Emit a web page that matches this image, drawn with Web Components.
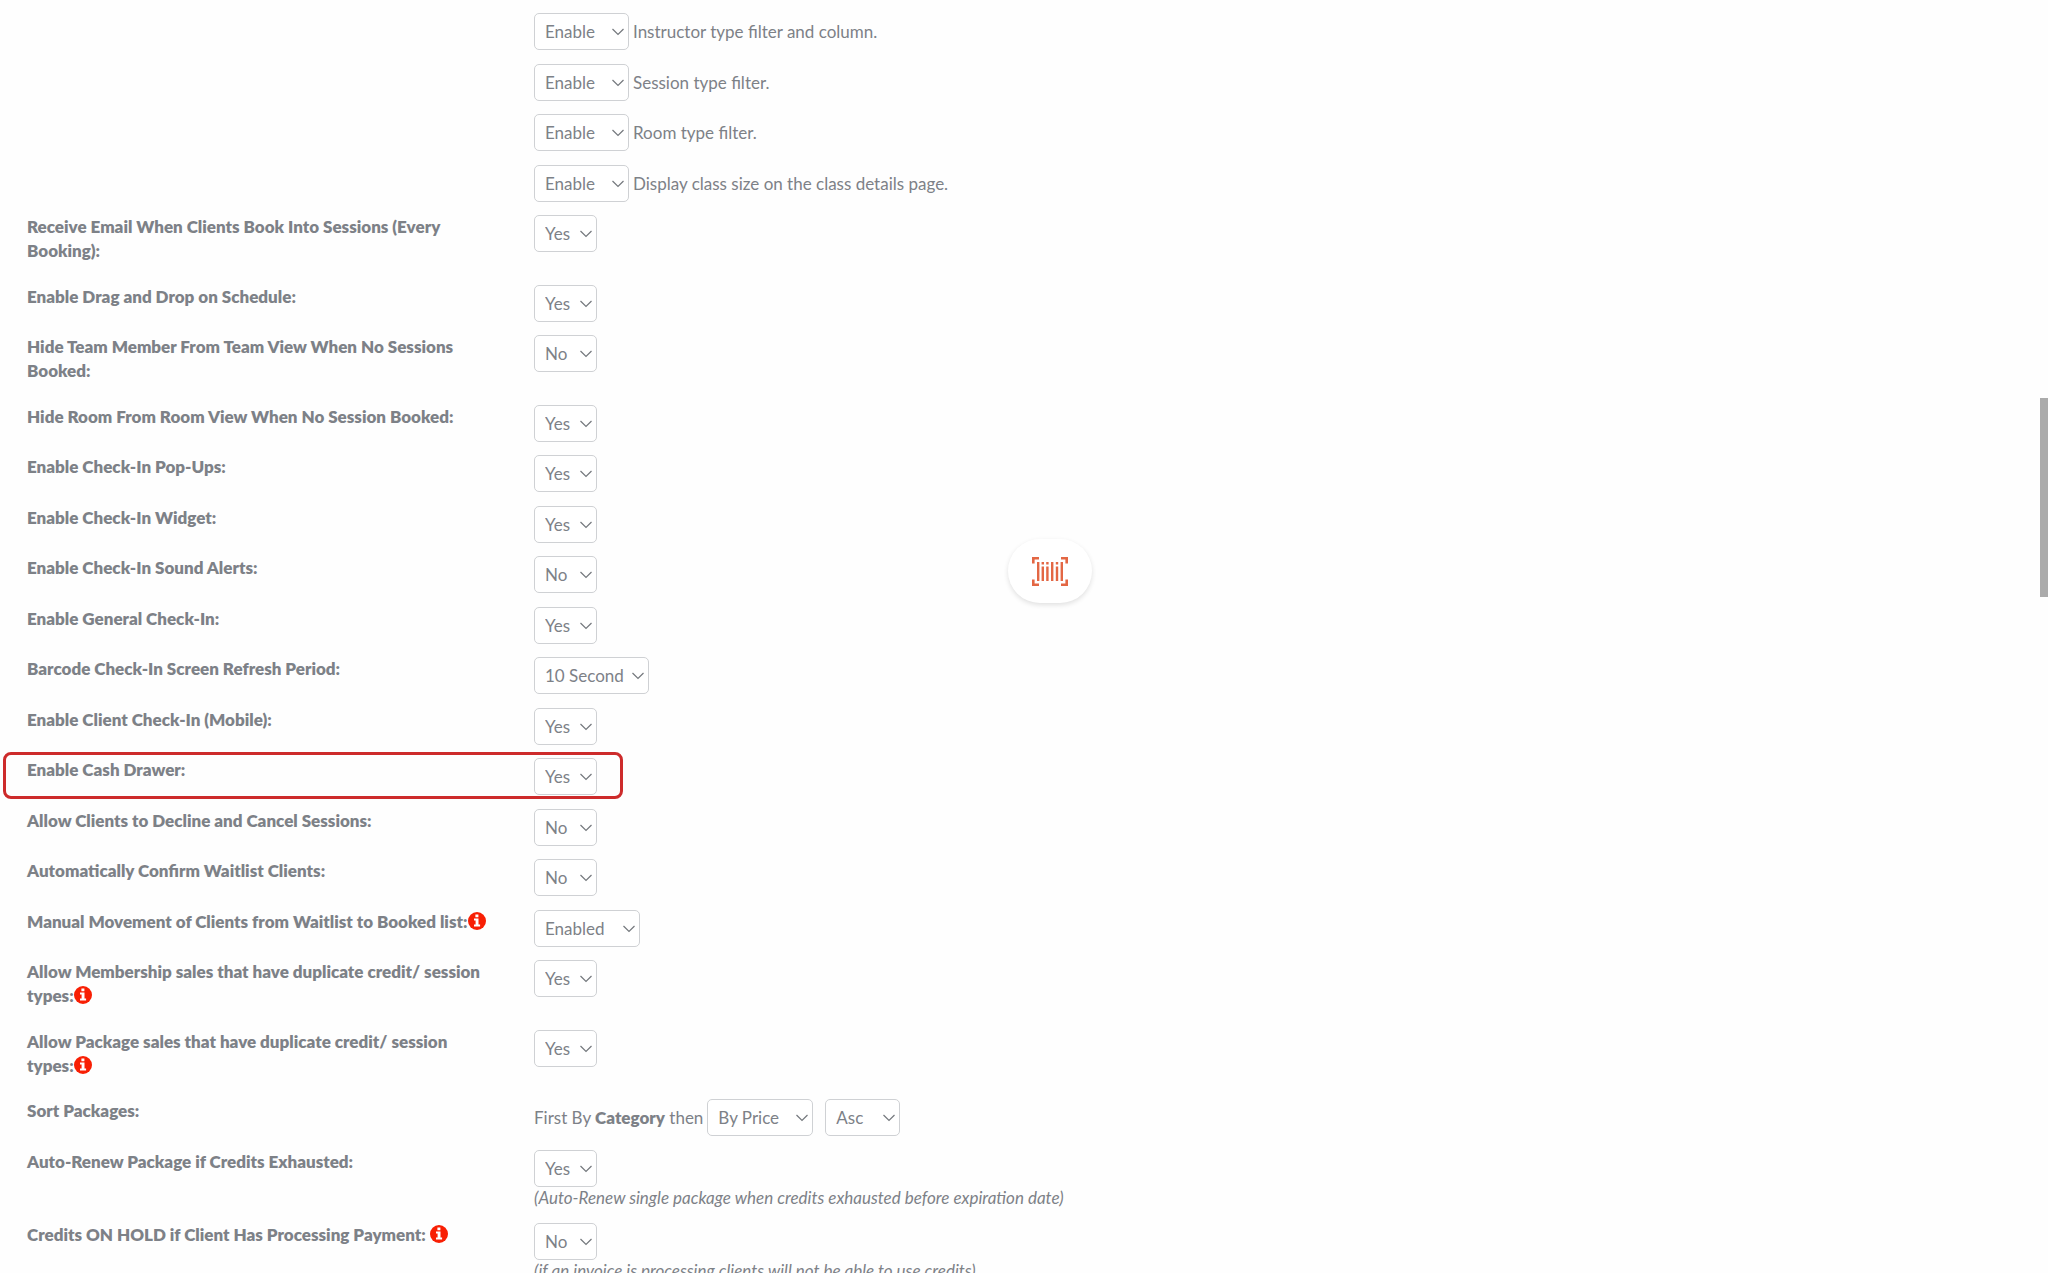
<!DOCTYPE html>
<html lang="en">
<head>
<meta charset="utf-8">
<meta name="viewport" content="width=device-width, initial-scale=1">
<title>Schedule Settings</title>
<style>
  body {
    margin: 0;
    background: #fefefe;
    color: #7d8187;
    font-family: Lato, "Liberation Sans", sans-serif;
    font-size: 17px;
    line-height: 24px;
  }
  b { font-weight: 800; }
</style>
</head>
<body>
<settings-page>
  <setting-row>
    <drop-down size="m"><select id="instructor-filter"><option>Enable</option><option>Disable</option></select></drop-down>
    <label for="instructor-filter">Instructor type filter and column.</label>
  </setting-row>
  <setting-row>
    <drop-down size="m"><select id="session-filter"><option>Enable</option><option>Disable</option></select></drop-down>
    <label for="session-filter">Session type filter.</label>
  </setting-row>
  <setting-row>
    <drop-down size="m"><select id="room-filter"><option>Enable</option><option>Disable</option></select></drop-down>
    <label for="room-filter">Room type filter.</label>
  </setting-row>
  <setting-row>
    <drop-down size="m"><select id="class-size"><option>Enable</option><option>Disable</option></select></drop-down>
    <label for="class-size">Display class size on the class details page.</label>
  </setting-row>
  <setting-row>
    <label slot="label" for="book-email">Receive Email When Clients Book Into Sessions (Every Booking):</label>
    <drop-down><select id="book-email"><option>Yes</option><option>No</option></select></drop-down>
  </setting-row>
  <setting-row>
    <label slot="label" for="drag-drop">Enable Drag and Drop on Schedule:</label>
    <drop-down><select id="drag-drop"><option>Yes</option><option>No</option></select></drop-down>
  </setting-row>
  <setting-row>
    <label slot="label" for="hide-team">Hide Team Member From Team View When No Sessions Booked:</label>
    <drop-down><select id="hide-team"><option>No</option><option>Yes</option></select></drop-down>
  </setting-row>
  <setting-row>
    <label slot="label" for="hide-room">Hide Room From Room View When No Session Booked:</label>
    <drop-down><select id="hide-room"><option>Yes</option><option>No</option></select></drop-down>
  </setting-row>
  <setting-row>
    <label slot="label" for="popups">Enable Check-In Pop-Ups:</label>
    <drop-down><select id="popups"><option>Yes</option><option>No</option></select></drop-down>
  </setting-row>
  <setting-row>
    <label slot="label" for="widget">Enable Check-In Widget:</label>
    <drop-down><select id="widget"><option>Yes</option><option>No</option></select></drop-down>
  </setting-row>
  <setting-row>
    <label slot="label" for="sound">Enable Check-In Sound Alerts:</label>
    <drop-down><select id="sound"><option>No</option><option>Yes</option></select></drop-down>
  </setting-row>
  <setting-row>
    <label slot="label" for="general">Enable General Check-In:</label>
    <drop-down><select id="general"><option>Yes</option><option>No</option></select></drop-down>
  </setting-row>
  <setting-row>
    <label slot="label" for="refresh">Barcode Check-In Screen Refresh Period:</label>
    <drop-down size="xl"><select id="refresh"><option>10 Second</option><option>20 Second</option></select></drop-down>
  </setting-row>
  <setting-row>
    <label slot="label" for="mobile">Enable Client Check-In (Mobile):</label>
    <drop-down><select id="mobile"><option>Yes</option><option>No</option></select></drop-down>
  </setting-row>
  <setting-row highlight>
    <label slot="label" for="cash-drawer">Enable Cash Drawer:</label>
    <drop-down><select id="cash-drawer"><option>Yes</option><option>No</option></select></drop-down>
  </setting-row>
  <setting-row>
    <label slot="label" for="decline">Allow Clients to Decline and Cancel Sessions:</label>
    <drop-down><select id="decline"><option>No</option><option>Yes</option></select></drop-down>
  </setting-row>
  <setting-row>
    <label slot="label" for="waitlist">Automatically Confirm Waitlist Clients:</label>
    <drop-down><select id="waitlist"><option>No</option><option>Yes</option></select></drop-down>
  </setting-row>
  <setting-row>
    <label slot="label" for="manual">Manual Movement of Clients from Waitlist to Booked list:<info-icon></info-icon></label>
    <drop-down size="l"><select id="manual"><option>Enabled</option><option>Disabled</option></select></drop-down>
  </setting-row>
  <setting-row>
    <label slot="label" for="dup-membership">Allow Membership sales that have duplicate credit/ session types:<info-icon></info-icon></label>
    <drop-down><select id="dup-membership"><option>Yes</option><option>No</option></select></drop-down>
  </setting-row>
  <setting-row>
    <label slot="label" for="dup-package">Allow Package sales that have duplicate credit/ session types:<info-icon></info-icon></label>
    <drop-down><select id="dup-package"><option>Yes</option><option>No</option></select></drop-down>
  </setting-row>
  <setting-row>
    <label slot="label" for="sort-by">Sort Packages:</label>
    <span>First By <b>Category</b> then</span>
    <drop-down size="l"><select id="sort-by"><option>By Price</option><option>By Name</option></select></drop-down>
    <drop-down size="s" spaced><select aria-label="Sort direction"><option>Asc</option><option>Desc</option></select></drop-down>
  </setting-row>
  <setting-row>
    <label slot="label" for="auto-renew">Auto-Renew Package if Credits Exhausted:</label>
    <drop-down><select id="auto-renew"><option>Yes</option><option>No</option></select></drop-down>
    <span slot="note">(Auto-Renew single package when credits exhausted before expiration date)</span>
  </setting-row>
  <setting-row>
    <label slot="label" for="credits-hold">Credits ON HOLD if Client Has Processing Payment: <info-icon></info-icon></label>
    <drop-down><select id="credits-hold"><option>No</option><option>Yes</option></select></drop-down>
    <span slot="note">(if an invoice is processing clients will not be able to use credits)</span>
  </setting-row>
</settings-page>
<scan-button></scan-button>
<scroll-thumb></scroll-thumb>

<script>
class SettingsPage extends HTMLElement {
  constructor() {
    super();
    this.attachShadow({ mode: "open" }).innerHTML = `
      <style>
        :host {
          display: block;
          box-sizing: border-box;
          height: 100vh;
          overflow: hidden;
          padding: 13px 6px 0 14px;
        }
        /* row spacing alternates 14 / 13 */
        ::slotted(setting-row) { padding-bottom: 14px; }
        ::slotted(setting-row:nth-child(even)) { padding-bottom: 13px; }
      </style>
      <slot></slot>
    `;
  }
}

// setting-row: label column, control column, optional note under the control
class SettingRow extends HTMLElement {
  constructor() {
    super();
    this.attachShadow({ mode: "open" }).innerHTML = `
      <style>
        :host {
          display: grid;
          grid-template-columns: 1fr 3fr;
          position: relative;
        }
        .label { padding: 0 28px 8px 13px; font-weight: 800; }
        .field { padding: 0 13px; }
        .controls {
          display: flex;
          align-items: center;
          gap: 4px;
          min-height: 37px;
        }
        .note { font-style: italic; line-height: 21px; }
        .note ::slotted(*) { display: block; padding-bottom: 2px; }
        .controls ::slotted([spaced]) { margin-left: 8px; }
        :host([highlight])::after {
          content: "";
          position: absolute;
          top: -6px;
          left: -11px;
          box-sizing: border-box;
          width: 620px;
          height: 47px;
          border: 3px solid #cd2b2b;
          border-radius: 8px;
          pointer-events: none;
        }
      </style>
      <div class="label"><slot name="label"></slot></div>
      <div class="field">
        <div class="controls"><slot></slot></div>
        <div class="note"><slot name="note"></slot></div>
      </div>
    `;
  }
}

// drop-down: frame and chevron round a slotted <select>
class DropDown extends HTMLElement {
  constructor() {
    super();
    this.attachShadow({ mode: "open" }).innerHTML = `
      <style>
        :host { display: inline-grid; align-items: center; width: 63px; }
        :host([size="s"]) { width: 75px; }
        :host([size="m"]) { width: 95px; }
        :host([size="l"]) { width: 106px; }
        :host([size="xl"]) { width: 115px; }
        ::slotted(select) {
          grid-area: 1 / 1;
          appearance: none;
          box-sizing: border-box;
          width: 100%;
          height: 37px;
          margin: 0;
          padding: 0 0 0 10px;
          border: 1px solid #cfd1d4;
          border-radius: 5px;
          background: #fff;
          color: inherit;
          font: inherit;
        }
        svg {
          grid-area: 1 / 1;
          justify-self: end;
          margin-right: 5px;
          pointer-events: none;
          z-index: 1;
        }
      </style>
      <slot></slot>
      <svg width="12" height="8" viewBox="0 0 12 8" fill="none" stroke="#74787d" stroke-width="1.2" aria-hidden="true">
        <path d="M.5 1 6 6.500 11.500 1"/>
      </svg>
    `;
  }
}

// info-icon: red help marker after a label
class InfoIcon extends HTMLElement {
  constructor() {
    super();
    this.attachShadow({ mode: "open" }).innerHTML = `
      <style>
        :host { display: inline-block; height: 18px; vertical-align: -2px; }
        svg { display: block; }
      </style>
      <svg width="18" height="18" viewBox="0 0 18 18" aria-hidden="true">
        <circle cx="9" cy="9" r="9" fill="#f81f04"/>
        <path fill="#fff" d="M7.4 2.6h3v2.7h-3zM6 6.6h4.5v5.8h1.6v2H6v-2h1.6V8.6H6z"/>
      </svg>
    `;
  }
}

// scan-button: floating barcode scanner button
class ScanButton extends HTMLElement {
  constructor() {
    super();
    this.attachShadow({ mode: "open" }).innerHTML = `
      <style>
        :host { position: fixed; top: 539px; left: 1008px; }
        button {
          display: flex;
          align-items: center;
          justify-content: center;
          width: 84px;
          height: 64px;
          padding: 0;
          border: 0;
          border-radius: 32px;
          background: #fff;
          box-shadow: 0 2px 5px rgba(0, 0, 0, 0.12);
          cursor: pointer;
        }
      </style>
      <button type="button" aria-label="Scan barcode">
        <svg width="36" height="29" viewBox="0 0 36 29" aria-hidden="true">
          <path fill="none" stroke="#e36744" stroke-width="2.6" d="M1.300 6.500V1.300H7M29 1.300h5.700V6.500M34.700 22.500v5.200H29M7 27.700H1.300V22.500"/>
          <path fill="#e36744" d="M5 5h2.400v19H5zM9.600 5H12v2.400H9.600zM9.600 9.500H12V24H9.600zM14.200 5h2.400v2.400h-2.400zM14.200 9.500h2.400V24h-2.400zM19 5h2.400v19H19zM23.800 5h2.400v2.400h-2.400zM23.800 9.500h2.400V24h-2.400zM28.600 5H31v19h-2.400z"/>
        </svg>
      </button>
    `;
  }
}

// scroll-thumb: slim scroll position marker on the window's edge
class ScrollThumb extends HTMLElement {
  constructor() {
    super();
    this.attachShadow({ mode: "open" }).innerHTML = `
      <style>
        :host {
          position: fixed;
          top: 398px;
          right: 0;
          width: 8px;
          height: 199px;
          background: #ababab;
        }
      </style>
    `;
  }
}

customElements.define("settings-page", SettingsPage);
customElements.define("setting-row", SettingRow);
customElements.define("drop-down", DropDown);
customElements.define("info-icon", InfoIcon);
customElements.define("scan-button", ScanButton);
customElements.define("scroll-thumb", ScrollThumb);
</script>
</body>
</html>
